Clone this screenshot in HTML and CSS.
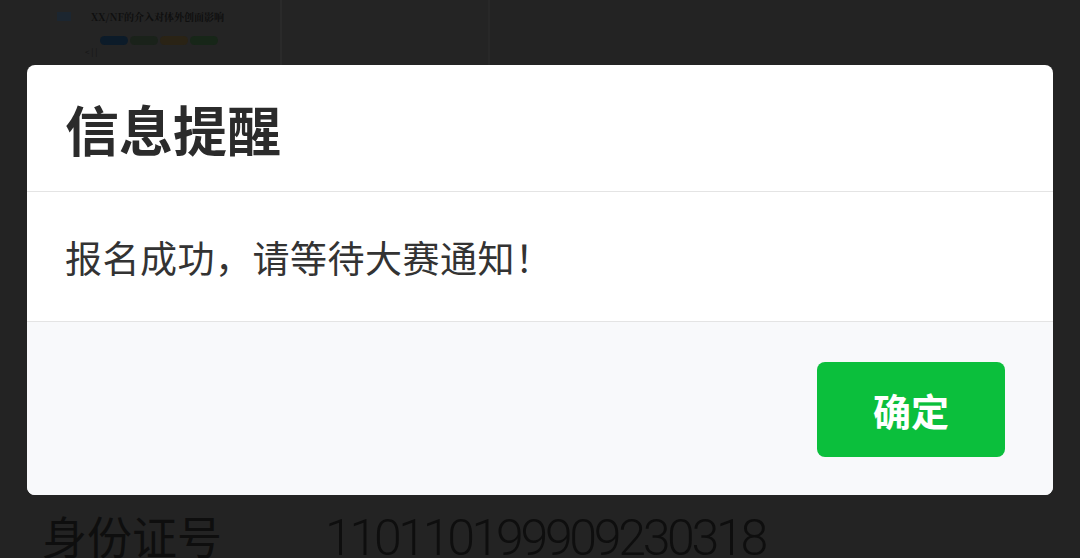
FILE: index.html
```html
<!DOCTYPE html>
<html lang="zh-CN">
<head>
    <meta charset="UTF-8">
    <meta name="viewport" content="width=device-width, initial-scale=1.0">
    <title>信息提醒</title>
    <link rel="stylesheet" href="styles.css">
</head>
<body>
<div id="page">
    <div class="top-strip">
        <div class="thumb-card">
            <div class="thumb-head">
                <span class="thumb-icon"></span>
                <span class="thumb-title">XX/NF的介入对体外创面影响</span>
            </div>
            <div class="thumb-pills">
                <span class="pill pill-blue"></span>
                <span class="pill pill-dark"></span>
                <span class="pill pill-orange"></span>
                <span class="pill pill-green"></span>
            </div>
            <div class="thumb-foot">&lt; | |</div>
        </div>
        <div class="thumb-col"></div>
        <div class="thumb-rest"></div>
    </div>
    <div class="info-row">
        <span class="info-label">身份证号</span>
        <span class="info-value">110110199909230318</span>
    </div>
</div>

<div id="mask">
    <div class="dialog">
        <div class="dialog-head">信息提醒</div>
        <div class="dialog-body">报名成功，请等待大赛通知！</div>
        <div class="dialog-foot">
            <button class="btn-ok" type="button">确定</button>
        </div>
    </div>
</div>
</body>
</html>
```

FILE: styles.css
```css
html, body {
    margin: 0;
    height: 100%;
    overflow: hidden; /* 스크롤 방지 */
}
body {
    background-color: #232323;
    font-family: "Noto Sans CJK SC", "Noto Sans", sans-serif;
    color: #333;
}
#page {
    height: 100vh;
    display: flex;
    flex-direction: column;
    justify-content: space-between;
}
.top-strip {
    display: flex;
    height: 65px;
}
.thumb-card {
    width: 230px;
    margin-left: 50px;
    padding-top: 9px;
    box-sizing: border-box;
    background-color: #242424;
}
.thumb-head {
    display: flex;
    align-items: center;
    gap: 20px;
    padding-left: 7px;
}
.thumb-icon {
    width: 14px;
    height: 9px;
    background-color: #1c2630;
}
.thumb-title {
    font-family: "Noto Serif CJK SC", "Liberation Serif", serif;
    font-size: 10px;
    font-weight: bold;
    color: #0f0f0f;
}
.thumb-pills {
    display: flex;
    gap: 2px;
    margin: 12px 0 0 50px;
}
.pill {
    width: 28px;
    height: 9px;
    border-radius: 5px;
}
.pill-blue { background-color: #0c1b29; }
.pill-dark { background-color: #1a221a; }
.pill-orange { background-color: #2a2315; }
.pill-green { background-color: #172618; }
.thumb-foot {
    margin: 2px 0 0 35px;
    font-size: 8px;
    color: #141414;
    line-height: 10px;
}
.thumb-col {
    width: 206px;
    border-left: 2px solid #2a2a2a;
    border-right: 2px solid #282828;
    background-color: #242424;
}
.thumb-rest {
    flex: 1;
}
.info-row {
    display: flex;
    align-items: baseline;
    height: 45px;
    padding-left: 42px;
    gap: 103px;
    color: #0e0e0e;
    font-size: 45px;
    line-height: 45px;
    white-space: nowrap;
}
.info-label {
    font-weight: 400;
}
.info-value {
    font-family: Roboto, "Noto Sans", sans-serif;
    font-size: 50px;
    font-weight: 300;
    letter-spacing: -3.3px;
}
#mask {
    position: absolute;
    top: 65px;
    left: 27px;
    right: 27px;
}
.dialog {
    background-color: #fff;
    border-radius: 8px;
    overflow: hidden;
}
.dialog-head {
    height: 126px;
    padding: 0 38px;
    display: flex;
    align-items: center;
    font-size: 54px;
    font-weight: bold;
    color: #2b2b2b;
    border-bottom: 1px solid #e4e4e4;
}
.dialog-body {
    height: 129px;
    padding: 0 38px;
    display: flex;
    align-items: center;
    font-size: 37px;
    letter-spacing: 0.5px;
    color: #333;
    border-bottom: 1px solid #e4e4e4;
}
.dialog-foot {
    height: 173px;
    background-color: #f8f9fb;
    display: flex;
    justify-content: flex-end;
    align-items: flex-start;
    padding: 40px 48px 0 0;
    box-sizing: border-box;
}
.btn-ok {
    width: 188px;
    height: 95px;
    border: none;
    border-radius: 8px;
    background-color: #0bbf3c;
    color: #fff;
    font-family: "Noto Sans CJK SC", sans-serif;
    font-size: 38px;
    font-weight: bold;
    cursor: pointer;
}
```
